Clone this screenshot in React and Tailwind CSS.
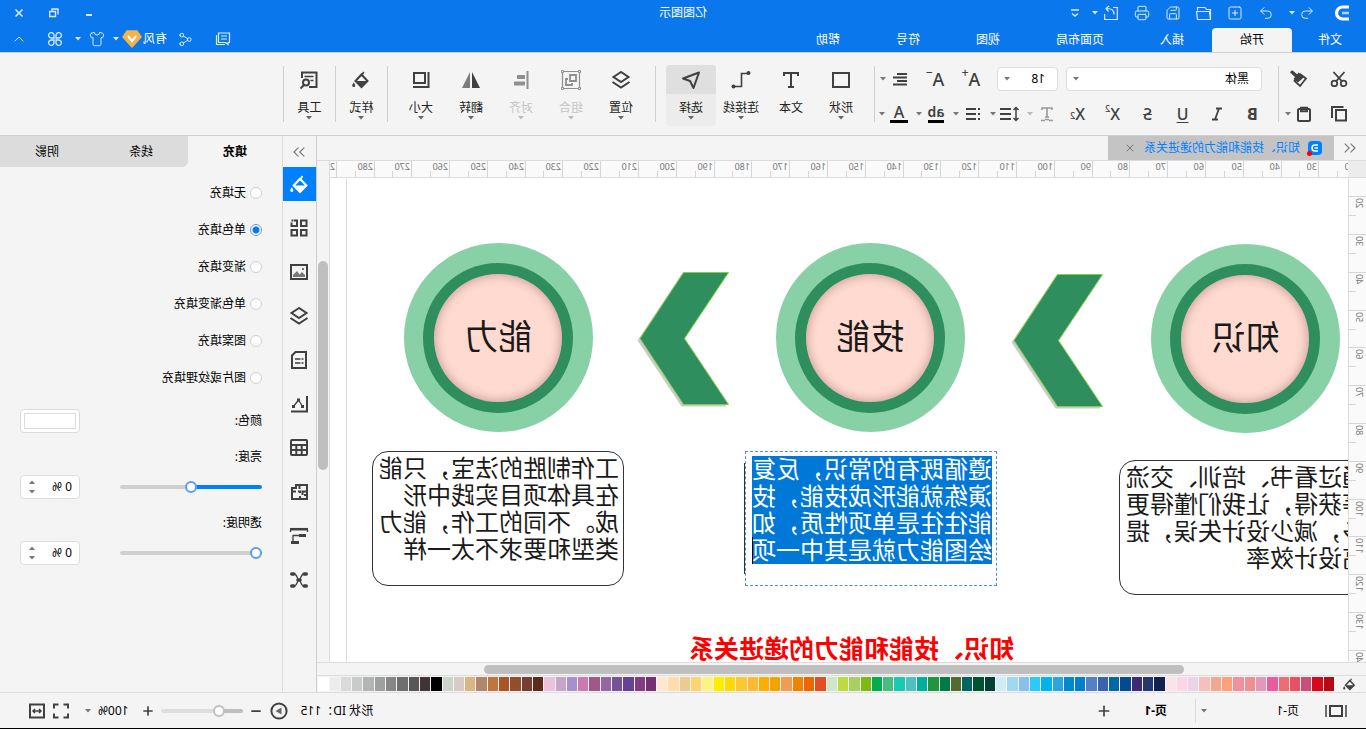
import React, { useState } from 'react'
import clsx from 'clsx'
import { Undo2, Redo2, SquarePlus, Save, Printer, Share2, Shirt, X, Plus, Minus, ChevronUp, ChevronsLeft, ChevronsRight } from 'lucide-react'

const MENUS = ['插入', '页面布局', '视图', '符号', '帮助']
const FILLS = ['无填充', '单色填充', '渐变填充', '单色渐变填充', '图案填充', '图片或纹理填充']
const DOC_TITLE = '知识、技能和能力的递进关系'

const PALETTE = (
  'b50a14 d7081c c94f78 e85165 ec6d72 e95c9f e397b9 ef8f8f f18f9e ffa07a f0a98f f5bfbb ead4e8 ffd5e5 ffe1e8 ' +
  '10224d 24386b 3f2b74 044a8f 0068a4 3b62ae 5282c4 0080cf 0089cf 2aa5e0 00b2f0 2fc8fa 88c0ec 9fd9f0 d1ebf6 ' +
  '043f34 00532e 00665f 546a2f 007a47 1f953d 00ae9d 50bfc0 19cab0 48bb7e 00ad51 7eb813 a4d065 bfd941 cee7c9 ' +
  'e34f22 ed6700 f08200 f39a55 f2a400 ffae00 ffb833 fac92f ffd900 ffed00 fdf382 ffd36e e9cb93 ffdcaa fde7cf ' +
  '743070 823d82 674193 745399 95669f a05888 cb7bb0 a88fcf c6a5cb ebc2db 5d2a1c 773d30 914d2c a95326 be763e ' +
  'b2866a ddb583 d6cbc6 cbd5cc 000000 403536 595657 6f6f6f 878787 9da09f b2b5b4 c9caca dadada ededed ffffff'
).split(' ')

function Svg({ size = 18, sw = 2, children, className }) {
  return (
    <svg width={size} height={size} viewBox={`0 0 ${size} ${size}`} fill="none" stroke="currentColor" strokeWidth={sw} className={clsx('shrink-0', className)} aria-hidden="true">
      {children}
    </svg>
  )
}

function Caret({ className }) {
  return (
    <svg width="8" height="4" viewBox="0 0 8 4" className={clsx('shrink-0', className)} aria-hidden="true">
      <path d="M1 0h6L4 3.5z" fill="currentColor" />
    </svg>
  )
}

/* icons */
const Bucket = ({ size = 18 }) => (
  <svg width={size} height={size} viewBox="0 0 18 18" fill="none" stroke="currentColor" strokeWidth="2" className="shrink-0" aria-hidden="true">
    <path d="M8.5 3.5 14.5 10 8.5 16 2.5 10z" />
    <path d="M3 10h11l-5.5 5.5z" fill="currentColor" stroke="none" />
    <path d="M8.8 5 6.2 1" strokeWidth="1.6" />
    <path d="M16.3 11.5c1 1.6 1.5 2.2 1.5 3a1.5 1.5 0 0 1-3 0c0-.8.5-1.4 1.5-3z" fill="currentColor" stroke="none" />
  </svg>
)
const Cut = () => (
  <Svg sw={1.8}>
    <circle cx="4.4" cy="13.4" r="2.8" /><circle cx="13.6" cy="13.4" r="2.8" />
    <path d="M3.5 2 12 11.4M14.5 2 6 11.4" />
  </Svg>
)
const Painter = () => (
  <Svg>
    <path d="M2 8.5 7.500 4.500 13.500 11 8 16z" strokeWidth="1.800" />
    <path d="M3.500 6.800 9.500 2.500 14.500 9 10 12.500z" fill="currentColor" stroke="none" />
    <path d="m11 6.500 4-3.500" strokeWidth="3.500" /><circle cx="15.800" cy="2.200" r="1.800" fill="currentColor" stroke="none" />
  </Svg>
)
const Copy = () => (
  <Svg><path d="M2 5h10v10.5H2z" /><path d="M4.5 2H16v11" /></Svg>
)
const Paste = () => (
  <Svg><rect x="3" y="4" width="12" height="12" rx="1" /><path d="M6 2.8h6v3.4H6z" /></Svg>
)
const Folder = () => (
  <Svg size={16} sw={1.2}><path d="M1.5 14.5v-10h4l1.5-2h7.5v3M1.5 14.500 2.600 6.500h12.900L14.500 14.500z" /></Svg>
)
const Export = () => (
  <Svg size={16} sw={1.2}><path d="M6 2.500H1.700v12h12.600V9M5 9.500c0-4 2-6 7-6M10 1l3 2.500L10.500 6.500" /></Svg>
)
const RectIcon = () => <Svg size={20}><path d="M2 3h16v14H2z" /></Svg>
const ConnectorIcon = () => (
  <Svg size={20} sw={1.6}>
    <path d="M3 3.500h6.500v13H17" /><circle cx="2.500" cy="3" r="2" fill="currentColor" stroke="none" /><circle cx="17.500" cy="16.500" r="2" fill="currentColor" stroke="none" />
  </Svg>
)
const SelectIcon = () => <Svg size={20}><path d="M2 2.500 18 8.500 11 11 7.500 18z" strokeLinejoin="round" /></Svg>
const Layers = ({ size = 20 }) => (
  <svg width={size} height={size} viewBox="0 0 20 20" fill="none" stroke="currentColor" strokeWidth="2" className="shrink-0" aria-hidden="true">
    <path d="M10 2 17.500 7 10 12 2.500 7z" /><path d="M1.500 12 10 17.600 18.500 12" />
  </svg>
)
const GroupIcon = () => (
  <Svg size={20} sw={1.2}>
    <path d="M1.500 1.500h17v17h-17z" />
    <path d="M5 5h6v6H5zM13 9h2v6H9v-2" strokeWidth="1.800" />
    <path d="M.500.500h2v2h-2zM17.500.500h2v2h-2zM.500 17.500h2v2h-2zM17.500 17.500h2v2h-2z" fill="#f4f4f4" strokeWidth="1" />
  </Svg>
)
const AlignIcon = () => (
  <Svg size={20}><path d="M3.500 1v18" /><path d="M6 7h8M6 13.500h11" strokeWidth="4" /></Svg>
)
const FlipIcon = () => (
  <Svg size={20}>
    <path d="M9 2v16H1z" fill="currentColor" stroke="none" /><path d="M11 2v16h8z" fill="#7b7b7b" stroke="none" />
  </Svg>
)
const SizeIcon = () => <Svg size={20}><path d="M6 3h11v10H6z" /><path d="M2.500 2v15H18" /></Svg>
const ToolsIcon = () => (
  <Svg size={20}>
    <path d="M10 17H2.500V2.500H17V8" /><path d="M5.500 6.500h9M5.500 10.500h3" strokeWidth="1.500" />
    <circle cx="13" cy="12.500" r="3" /><path d="m15 15 3.500 3.500" />
  </Svg>
)
const ImageIcon = () => (
  <Svg size={20}><path d="M2 3h16v14H2z" /><path d="M4 15v-2l3-3 2.500 2.500L12 9l4 4v2z" fill="#777" stroke="none" /><path d="M5 6h2v2H5z" fill="#777" stroke="none" /></Svg>
)
const GridIcon = () => (
  <Svg size={20}><path d="M2.500 2.500h5.500v5.500H2.500zM2.500 12h5.500v5.500H2.500zM12 12h5.500v5.500H12z" /><path d="M15.500 2.500H12v5.500h5.500V4.500" /><path d="M16.800 1.500v2" strokeWidth="1.500" /></Svg>
)
const DocIcon = () => (
  <Svg size={20}><path d="M3 2h10.500L17 5.500V18H3z" /><path d="M8.500 9H14M8.500 13H14M5.500 9h2M5.500 13h2" strokeWidth="1.600" /></Svg>
)
const ChartIcon = () => (
  <Svg size={20}>
    <path d="M2 2v15.500h16" /><path d="m6.500 12.500 4-6.500 5 6.500" strokeWidth="1.300" />
    <path d="M9 4.500h3v3H9zM5 11h3v3H5zM14 11h3v3h-3z" fill="currentColor" stroke="none" />
  </Svg>
)
const TableIcon = () => (
  <Svg size={20}><rect x="2" y="2" width="16" height="15" rx="1" /><path d="M2 7h16M2 12h16M7.300 7v10M12.700 7v10" /></Svg>
)
const PlanIcon = () => (
  <Svg size={20}><path d="M2 3h11v3h4v11H2zM2 9.500h4.500V13M2 13h3M9 17v-3M9 11V9.500h2M13 9.500h4M9.500 3v4" /></Svg>
)
const GanttIcon = () => (
  <Svg size={20} sw={1.300}>
    <path d="M1 3.200h18" strokeWidth="2.500" /><path d="M1.500 4v2M18.500 4v2" />
    <path d="M3 9.500h7M10 16.500h8" strokeWidth="3" /><path d="M10 9.500h6v6" />
  </Svg>
)
const MindIcon = () => (
  <Svg size={20} sw={1.400}>
    <path d="M5 4c3.500 0 3 6 5 6s1.500-6 5-6M5 16c3.500 0 3-6 5-6s1.500 6 5 6" />
    <path d="M2.800 4h2M15.200 4h2M2.800 16h2M15.200 16h2M9 10h2" strokeWidth="3.600" strokeLinecap="round" />
  </Svg>
)

function IconButton({ label, className, children }) {
  return (
    <button type="button" aria-label={label} className={clsx('flex shrink-0 items-center justify-center', className)}>
      {children}
    </button>
  )
}

function Header() {
  const thin = { size: 16, strokeWidth: 1.5 }
  return (
    <header className="bg-[#0a77ec] text-[#d9ebff]">
      <div className="flex h-[26px] items-center justify-between">
        <div className="flex flex-1 items-center">
          <svg width="24" height="18" viewBox="0 0 24 18" fill="none" className="ml-3" aria-hidden="true">
            <path d="M5 3h6.500a6 6 0 0 1 0 12H5" stroke="#fff" strokeWidth="3.200" />
            <path d="M5 9h7" stroke="#a9d3ff" strokeWidth="2.600" />
          </svg>
          <IconButton label="撤销" className="ml-3 w-[22px]"><Undo2 {...thin} /></IconButton>
          <Caret />
          <IconButton label="重做" className="ml-1.5 w-[31px]"><Redo2 {...thin} /></IconButton>
          <IconButton label="新建" className="w-[31px]"><SquarePlus {...thin} /></IconButton>
          <IconButton label="打开" className="w-[31px]"><Folder /></IconButton>
          <IconButton label="保存" className="w-[31px]"><Save {...thin} /></IconButton>
          <IconButton label="打印" className="w-[31px]"><Printer {...thin} /></IconButton>
          <IconButton label="导出" className="ml-1 w-6"><Export /></IconButton>
          <Caret />
          <IconButton label="更多" className="ml-1 w-6">
            <Svg size={10} sw={1.4}><path d="M1 2h8M2 5.500l3 2.500 3-2.500" /></Svg>
          </IconButton>
        </div>
        <h1 className="text-white">亿图图示</h1>
        <div className="flex flex-1 items-center justify-end">
          <IconButton label="最小化" className="w-[35px]">
            <Svg size={10}><path d="M2 7h6" /></Svg>
          </IconButton>
          <IconButton label="还原" className="w-[35px]">
            <Svg size={10} sw={1.4}><path d="M3.500 3.500h5.800v5H3.500zM1 6.500V1h6v2" /></Svg>
          </IconButton>
          <IconButton label="关闭" className="mr-0.5 w-[35px]">
            <Svg size={10} sw={1.6}><path d="m1.500 1.500 7 7M8.500 1.500l-7 7" /></Svg>
          </IconButton>
        </div>
      </div>
      <div className="flex h-[26px] items-end justify-between">
        <nav className="flex text-white">
          <a href="#file" className="flex h-6 items-center pr-[26px] pl-6">文件</a>
          <a href="#home" className="flex h-6 items-center rounded-t-sm bg-[#f4f4f4] px-7 text-black">开始</a>
          {MENUS.map((m) => (
            <a key={m} href="#menu" className="flex h-6 items-center px-7">{m}</a>
          ))}
        </nav>
        <div className="flex h-full items-center">
          <IconButton label="评论" className="w-[37px]">
            <Svg size={16} sw={1.2}><path d="M1.500 2h11v9.500h-7L3 13.500v-2H1.500zM4 5h6M4 8h6M14.500 4v9.500H6" /></Svg>
          </IconButton>
          <IconButton label="分享" className="w-[37px]"><Share2 size={15} strokeWidth={1.6} /></IconButton>
          <button type="button" className="flex items-center gap-px text-white">
            有风
            <svg width="20" height="18" viewBox="0 0 20 18" aria-hidden="true">
              <path d="M5 1h10l4 6-9 10L1 7z" fill="#f5b247" stroke="#f5b247" strokeWidth="1.500" strokeLinejoin="round" />
              <path d="m6 6 4 5 4-5" fill="none" stroke="#fff" strokeWidth="2.200" />
            </svg>
          </button>
          <Caret className="mr-1 ml-0.5" />
          <IconButton label="主题" className="w-[22px]"><Shirt size={16} strokeWidth={1.5} /></IconButton>
          <Caret className="mr-0.5 ml-1" />
          <IconButton label="应用" className="w-[34px]">
            <Svg size={16} sw={1.3}>
              <path d="M7 7H4.500A2.700 2.700 0 1 1 7 4.500zM9 7V4.500A2.700 2.700 0 1 1 11.500 7zM7 9v2.500A2.700 2.700 0 1 1 4.500 9zM9 9h2.500A2.700 2.700 0 1 1 9 11.500z" />
            </Svg>
          </IconButton>
          <IconButton label="收起" className="w-[38px]"><ChevronUp size={16} strokeWidth={1.5} /></IconButton>
        </div>
      </div>
    </header>
  )
}

function Divider() {
  return <div className="mt-[13px] h-14 w-px shrink-0 bg-[#cfcfcf]" />
}

function BigButton({ label, icon, caret = true, active, disabled, className = 'w-[50px]' }) {
  return (
    <button
      type="button"
      disabled={disabled}
      className={clsx('mt-3 flex h-[61px] shrink-0 flex-col items-center rounded-sm', className, active && 'bg-[#ececec]', disabled ? 'text-[#c4c4c4]' : 'text-[#222]')}
    >
      <span className={clsx('flex h-[29px] w-full items-center justify-center rounded-t-sm', active && 'bg-[#dfdfdf]', disabled ? 'text-[#8f8f8f]' : 'text-[#404040]')}>
        {icon}
      </span>
      <span className="mt-1.5">{label}</span>
      {caret && <Caret className={disabled ? 'text-[#bbb]' : 'text-[#666]'} />}
    </button>
  )
}

function SmallWithCaret({ label, children, disabled }) {
  return (
    <button type="button" aria-label={label} disabled={disabled} className={clsx('mr-[3px] flex items-center', disabled && 'text-[#999]')}>
      <span className="flex w-[26px] justify-center">{children}</span>
      <Caret className={disabled ? 'text-[#bbb]' : 'text-[#777]'} />
    </button>
  )
}

function Picker({ label, value, className }) {
  return (
    <div className={clsx('relative', className)}>
      <select aria-label={label} defaultValue={value} className="h-6 w-full appearance-none rounded-sm border border-[#dcdcdc] bg-white pl-3 text-black outline-none">
        <option>{value}</option>
      </select>
      <Caret className="pointer-events-none absolute top-2.5 right-1.5 text-[#777]" />
    </div>
  )
}

function Ribbon() {
  return (
    <section className="flex h-21 shrink-0 border-y border-[#cfcfcf] text-[#404040]">
      <div className="w-[87px] shrink-0 pt-2 pl-3">
        <div className="flex h-[35px] items-center gap-2.5">
          <IconButton label="剪切" className="w-[30px]"><Cut /></IconButton>
          <IconButton label="格式刷" className="w-[30px]"><Painter /></IconButton>
        </div>
        <div className="flex h-[35px] items-center">
          <IconButton label="复制" className="mr-2 w-[30px]"><Copy /></IconButton>
          <IconButton label="粘贴" className="w-6"><Paste /></IconButton>
          <Caret className="text-[#777]" />
        </div>
      </div>
      <Divider />
      <div className="shrink-0 pt-2 pl-2">
        <div className="flex h-[35px] items-center pl-2">
          <Picker label="字体" value="黑体" className="mr-2 w-[196px]" />
          <Picker label="字号" value="18" className="mr-2 w-[61px]" />
          <IconButton label="增大字号" className="w-9 text-lg leading-5 font-medium">A<sup className="text-xs">+</sup></IconButton>
          <IconButton label="减小字号" className="mr-1 w-9 text-lg leading-5 font-medium">A<sup className="text-xs">−</sup></IconButton>
          <SmallWithCaret label="对齐方式">
            <Svg size={16}><path d="M1 3h10M1 6.500h14M1 10h10M1 13.500h14" strokeWidth="1.800" /></Svg>
          </SmallWithCaret>
        </div>
        <div className="flex h-[35px] items-center">
          <IconButton label="加粗" className="w-[35px] text-base font-bold">B</IconButton>
          <IconButton label="斜体" className="w-[35px]">
            <Svg size={14} sw={1.8}><path d="M2 1.500h6M6 12.500h6M5 1.500l4 11" /></Svg>
          </IconButton>
          <IconButton label="下划线" className="w-[35px] text-base font-medium underline underline-offset-2">U</IconButton>
          <IconButton label="删除线" className="w-[35px] text-base font-medium line-through">S</IconButton>
          <IconButton label="上标" className="w-[35px] text-base font-medium">X<sup className="text-[9px]">2</sup></IconButton>
          <IconButton label="下标" className="w-[35px] text-base font-medium">X<sub className="text-[9px]">2</sub></IconButton>
          <SmallWithCaret label="文字效果" disabled>
            <Svg size={16} sw={1.6}><path d="M3 4V2h10v2M8 2v9M6 11h4M2 14.500h4M10 14.500h4M6 13.500h4" /></Svg>
          </SmallWithCaret>
          <SmallWithCaret label="行距">
            <Svg size={20}><path d="M9 5h11M9 10h11M9 15h11" /><path d="M4 3.500v13M1.500 6 4 3.500 6.500 6M1.500 14 4 16.500 6.500 14" strokeWidth="1.500" /></Svg>
          </SmallWithCaret>
          <SmallWithCaret label="项目符号">
            <Svg size={16}><path d="M5 3h10M5 8h10M5 13h10M1 3h2M1 8h2M1 13h2" /></Svg>
          </SmallWithCaret>
          <SmallWithCaret label="突出显示">
            <span className="border-b-[3px] border-black text-sm leading-4 font-semibold">ab</span>
          </SmallWithCaret>
          <SmallWithCaret label="字体颜色">
            <span className="w-[18px] border-b-[3px] border-black text-center text-base leading-4 font-medium">A</span>
          </SmallWithCaret>
        </div>
      </div>
      <Divider />
      <div className="flex shrink-0 pr-2.5 pl-2">
        <BigButton label="形状" icon={<RectIcon />} />
        <BigButton label="文本" caret={false} icon={<Svg size={20}><path d="M3 6V3h14v3M10 3v14M7 17h6" /></Svg>} />
        <BigButton label="连接线" icon={<ConnectorIcon />} />
        <BigButton label="选择" icon={<SelectIcon />} active />
      </div>
      <Divider />
      <div className="flex shrink-0 pr-2 pl-[9px]">
        <BigButton label="位置" icon={<Layers />} />
        <BigButton label="组合" icon={<GroupIcon />} disabled />
        <BigButton label="对齐" icon={<AlignIcon />} disabled />
        <BigButton label="翻转" icon={<FlipIcon />} />
        <BigButton label="大小" icon={<SizeIcon />} />
      </div>
      <Divider />
      <BigButton label="样式" icon={<Bucket />} className="w-[51px]" />
      <Divider />
      <BigButton label="工具" icon={<ToolsIcon />} className="w-[51px]" />
      <Divider />
    </section>
  )
}

// one label every 10 mm
const STEP = 37.8

function HorizontalRuler() {
  const marks = Array.from({ length: 29 }, (_, i) => 20 + i * 10)
  return (
    <svg className="h-full w-full text-[9px]" aria-hidden="true">
      {marks.map((m) => {
        const x = Math.round(28.5 + ((m - 30) / 10) * STEP)
        return (
          <g key={m}>
            <path d={`M${x + 0.5} 0v18M${x + 19.5} 10v8`} stroke="#d5d5d5" />
            <text x={x + 2} y="9" fill="#777">{m}</text>
          </g>
        )
      })}
    </svg>
  )
}

function VerticalRuler() {
  const marks = Array.from({ length: 26 }, (_, i) => 10 + i * 10)
  return (
    <svg className="h-full w-full text-[9px]" aria-hidden="true">
      {marks.map((m) => {
        const y = Math.round(56 + ((m - 30) / 10) * STEP)
        return (
          <g key={m}>
            <path d={`M0 ${y + 0.5}h17M10 ${y + 19.5}h7`} stroke="#d5d5d5" />
            <text transform={`translate(10 ${y + 2}) rotate(-90)`} textAnchor="end" fill="#777">{m}</text>
          </g>
        )
      })}
    </svg>
  )
}

function Ring({ label, className }) {
  return (
    <div className={clsx('absolute flex size-[189px] items-center justify-center rounded-full bg-[#88d1a6]', className)}>
      <div className="flex size-[150px] items-center justify-center rounded-full bg-[#2e8e5e]">
        <div className="flex size-[128px] items-center justify-center rounded-full bg-[#ffdad1] text-[34px] text-[#1a1a1a] shadow-[inset_0_0_8px_2px_rgba(90,50,40,0.3)]">
          {label}
        </div>
      </div>
    </div>
  )
}

function Chevron({ className }) {
  return (
    <svg width="93" height="137" viewBox="0 0 93 137" className={clsx('absolute', className)} aria-hidden="true">
      <path d="M3.500 3.500h45l44 66-44 66h-45l44-66z" fill="#cbcbcb" />
      <path d="M1.500 1.500h45l43.500 66-43.500 66h-45l44-66z" fill="#2e8e5e" stroke="#86cf45" />
    </svg>
  )
}

function TextBox({ lines, className }) {
  return (
    <div className={clsx('absolute h-[135px] w-[252px] pt-[3px] pl-1 text-2xl leading-[27px] whitespace-nowrap', className)}>
      {lines.map((l) => <p key={l}>{l}</p>)}
    </div>
  )
}

function Canvas() {
  return (
    <div className="relative min-h-0 flex-1 overflow-hidden bg-white font-['Liberation_Sans','Noto_Sans_CJK_SC',sans-serif] text-[#1a1a1a]">
      <div className="absolute inset-y-0 left-[1001px] w-px bg-[#dcdcdc]" />
      <Ring label="知识" className="top-[66px] left-[8px]" />
      <Ring label="技能" className="top-[65px] left-[383px]" />
      <Ring label="能力" className="top-[65px] left-[755px]" />
      <Chevron className="top-[95px] left-[244px]" />
      <Chevron className="top-[93px] left-[618px]" />
      <TextBox
        className="top-[282px] left-[-23px] rounded-[16px] border border-[#333]"
        lines={['通过看书、培训、交流', '等获得，让我们懂得更', '多，减少设计失误，提', '高设计效率']}
      />
      <div className="absolute top-[285px] left-[603px] h-[111px] w-px bg-[#333]" />
      <div className="absolute top-[273px] left-[351px] h-[135px] w-[252px] border border-dashed border-[#4a8fdc] pt-1 pl-1">
        <div className="h-27 w-60 bg-[#0078d7] text-2xl leading-[27px] whitespace-nowrap text-white">
          <p>遵循既有的常识，反复</p>
          <p>演练就能形成技能，技</p>
          <p>能往往是单项性质，如</p>
          <p className="border-r border-black">绘图能力就是其中一项</p>
        </div>
      </div>
      <TextBox
        className="top-[273px] left-[724px] rounded-[16px] border border-[#333]"
        lines={['工作制胜的法宝，只能', '在具体项目实践中形', '成。不同的工作，能力', '类型和要求不太一样']}
      />
      <h2 className="absolute top-[453px] left-[334px] text-[25px] leading-9 font-bold whitespace-nowrap text-[#ff0000]">{DOC_TITLE}</h2>
    </div>
  )
}

function Workspace() {
  return (
    <main className="flex min-w-0 flex-1 flex-col">
      <div className="flex h-6 shrink-0">
        <IconButton label="展开" className="w-8 text-[#777]"><ChevronsLeft size={20} strokeWidth={1.3} /></IconButton>
        <div className="flex w-[226px] items-center bg-[#c4c4c4] pl-3 text-[#0080ff]">
          <span className="relative mr-2 flex size-3.5 items-center justify-center rounded-sm bg-[#0080ff]">
            <svg width="8" height="8" viewBox="0 0 8 8" fill="none" stroke="#fff" strokeWidth="1.500" aria-hidden="true"><path d="M1 1h3a3 3 0 0 1 0 6H1M1 4h3.500" /></svg>
            <span className="absolute -right-px -bottom-px size-[5px] rounded-full bg-[#f00]" />
          </span>
          <span className="whitespace-nowrap">{DOC_TITLE}</span>
          <IconButton label="关闭文档" className="ml-2 text-[#777]"><X size={12} strokeWidth={2} /></IconButton>
        </div>
      </div>
      <div className="flex min-h-0 flex-1 border-t border-[#dcdcdc]">
        <div className="flex min-w-0 flex-1 flex-col">
          <div className="flex h-[17px] shrink-0 border-b border-[#dcdcdc] bg-[#fafafa]">
            <div className="w-[18px] shrink-0 bg-[#ececec]" />
            <HorizontalRuler />
          </div>
          <div className="flex min-h-0 flex-1">
            <div className="w-[18px] shrink-0 border-r border-[#dcdcdc] bg-[#fafafa]"><VerticalRuler /></div>
            <Canvas />
          </div>
        </div>
        <div className="w-[13px] shrink-0 border-l border-[#dcdcdc] px-px pt-[100px]">
          <div className="h-[209px] rounded-full bg-[#bfbfbf]" />
        </div>
      </div>
      <div className="flex h-[13px] shrink-0 items-center border-t border-[#dcdcdc]">
        <div className="ml-[182px] h-[9px] w-[700px] rounded-full bg-[#bfbfbf]" />
      </div>
      <div className="flex h-[17px] shrink-0 border-t border-[#dcdcdc] pr-px text-[#404040]">
        <div className="flex w-8 items-center justify-center"><Bucket size={13} /></div>
        <div className="flex flex-1 gap-px py-px">
          {PALETTE.map((c) => (
            <button key={c} type="button" aria-label={`#${c}`} className="flex-1" style={{ backgroundColor: `#${c}` }} />
          ))}
        </div>
      </div>
    </main>
  )
}

function ToolColumn() {
  const tools = [
    ['形状库', <GridIcon />], ['图片', <ImageIcon />], ['图层', <Layers />], ['文档', <DocIcon />], ['图表', <ChartIcon />],
    ['表格', <TableIcon />], ['平面图', <PlanIcon />], ['甘特图', <GanttIcon />], ['思维导图', <MindIcon />],
  ]
  return (
    <aside className="flex w-[34px] shrink-0 flex-col border-l border-[#cfcfcf] text-[#404040]">
      <IconButton label="收起面板" className="h-[31px] text-[#777]"><ChevronsRight size={20} strokeWidth={1.3} /></IconButton>
      <div className="flex flex-col gap-2.5">
        <IconButton label="填充" className="h-[34px] bg-[#0080ff] text-white"><Bucket size={19} /></IconButton>
        {tools.map(([name, icon]) => (
          <IconButton key={name} label={name} className="h-[34px]">{icon}</IconButton>
        ))}
      </div>
    </aside>
  )
}

const THUMB =
  '[&::-webkit-slider-thumb]:size-3 [&::-webkit-slider-thumb]:appearance-none [&::-webkit-slider-thumb]:rounded-full [&::-webkit-slider-thumb]:border-2 [&::-webkit-slider-thumb]:bg-white'

function PercentRow({ id, label, value, track }) {
  return (
    <div>
      <label htmlFor={id} className="block h-[18px] leading-[18px]">{label}</label>
      <div className="mt-[9px] flex items-center justify-between">
        <input
          id={id}
          type="range"
          defaultValue={value}
          className={clsx('h-1 w-[142px] appearance-none rounded-full [&::-webkit-slider-thumb]:border-[#569ff5]', THUMB, track)}
        />
        <div className="flex h-6 w-[60px] items-center justify-between rounded-sm border border-[#dcdcdc] bg-white pr-[7px] pl-[7px]">
          <input aria-label={`${label}数值`} defaultValue="0 %" className="w-8 bg-transparent outline-none" />
          <span className="flex flex-col gap-1.5 text-[#777]">
            <button type="button" aria-label="增加" className="rotate-180"><Caret /></button>
            <button type="button" aria-label="减少"><Caret /></button>
          </span>
        </div>
      </div>
    </div>
  )
}

function FillPanel() {
  const [fill, setFill] = useState('单色填充')
  return (
    <aside className="w-[283px] shrink-0 border-l border-[#dcdcdc] text-black">
      <div className="flex h-[31px]">
        <button type="button" className="w-[94px] font-bold">填充</button>
        <div className="flex flex-1 rounded-bl-md bg-[#dcdcdc]">
          <button type="button" className="flex-1">线条</button>
          <button type="button" className="flex-1">阴影</button>
        </div>
      </div>
      <div className="px-5 pt-[7px]">
        {FILLS.map((f) => (
          <label key={f} className="flex h-[37px] items-center gap-1">
            <input
              type="radio"
              name="fill"
              checked={fill === f}
              onChange={() => setFill(f)}
              className="size-3 appearance-none rounded-full border border-[#cfcfcf] bg-white checked:border-[#569ff5] checked:bg-[radial-gradient(circle,#0a77ec_0_3px,#fff_4px)]"
            />
            {f}
          </label>
        ))}
        <div className="mt-[13px] flex h-6 items-center justify-between">
          <label htmlFor="fill-color">颜色:</label>
          <input
            id="fill-color"
            type="color"
            defaultValue="#ffffff"
            className="h-6 w-[60px] appearance-none rounded-sm border border-[#dcdcdc] bg-white p-[3px] [&::-webkit-color-swatch]:rounded-none [&::-webkit-color-swatch]:border [&::-webkit-color-swatch]:border-[#dcdcdc] [&::-webkit-color-swatch-wrapper]:p-0"
          />
        </div>
        <div className="mt-[15px] flex flex-col gap-[15px]">
          <PercentRow id="brightness" label="亮度:" value={50} track="bg-[linear-gradient(to_right,#0080ff_50%,#d0d0d0_50%)]" />
          <PercentRow id="opacity" label="透明度:" value={0} track="bg-[#d0d0d0]" />
        </div>
      </div>
    </aside>
  )
}

function StatusBar() {
  return (
    <footer className="flex h-9 shrink-0 items-center justify-between border-t border-[#dcdcdc] text-black">
      <div className="flex items-center pl-[19px]">
        <IconButton label="页面视图" className="w-[22px] text-[#404040]">
          <Svg size={22}><path d="M5 6h12v10H5z" /><path d="M1 5v12M21 5v12" strokeWidth="1.500" /></Svg>
        </IconButton>
        <span className="ml-[26px] w-[70px]">页-1</span>
        <Caret className="ml-[21px] text-[#777]" />
        <div className="ml-1 h-6 w-px bg-[#dcdcdc]" />
        <a href="#page-1" className="ml-7 font-bold">页-1</a>
        <IconButton label="添加页面" className="ml-8 text-[#404040]"><Plus size={16} strokeWidth={2.5} /></IconButton>
      </div>
      <div className="flex items-center pr-7 text-[#404040]">
        <span className="mr-3 whitespace-nowrap text-black">形状 ID：115</span>
        <IconButton label="播放">
          <Svg size={20}><circle cx="10" cy="10" r="7.600" /><path d="m7.500 6.500 6 3.500-6 3.500z" fill="#666" stroke="none" /></Svg>
        </IconButton>
        <IconButton label="缩小" className="ml-1.5"><Minus size={14} strokeWidth={3} /></IconButton>
        <input
          aria-label="缩放"
          type="range"
          defaultValue={25}
          className={clsx('mx-1.5 h-1 w-[82px] appearance-none rounded-full bg-[linear-gradient(to_right,#bfbfbf_28%,#dedede_28%)] [&::-webkit-slider-thumb]:border-[#bfbfbf]', THUMB)}
        />
        <IconButton label="放大"><Plus size={14} strokeWidth={2.800} /></IconButton>
        <span className="ml-3 text-black">100%</span>
        <Caret className="mx-1.5 text-[#777]" />
        <IconButton label="全屏" className="ml-2">
          <Svg size={18}><path d="M2 6.500V2.500h4.500M11.500 2.500H16v4M16 11.500v4h-4.500M6.500 15.500H2v-4" /></Svg>
        </IconButton>
        <IconButton label="适应宽度" className="ml-1.5">
          <Svg size={18}><path d="M2 2.500h14v13H2z" /><path d="M5 9h8M7 7 5 9l2 2M11 7l2 2-2 2" strokeWidth="1.500" /></Svg>
        </IconButton>
      </div>
    </footer>
  )
}

export default function App() {
  return (
    <div className="flex h-screen w-full -scale-x-100 flex-col overflow-hidden border-b border-black bg-[#f4f4f4] font-['Noto_Sans','Noto_Sans_CJK_SC',sans-serif] text-xs">
      <Header />
      <Ribbon />
      <div className="flex min-h-0 flex-1">
        <Workspace />
        <ToolColumn />
        <FillPanel />
      </div>
      <StatusBar />
    </div>
  )
}
